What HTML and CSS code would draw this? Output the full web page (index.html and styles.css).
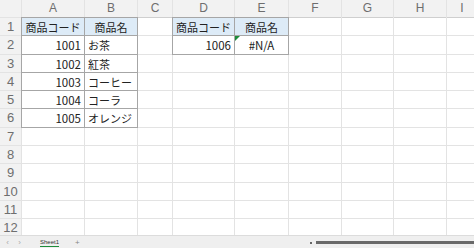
FILE: index.html
```html
<!DOCTYPE html>
<html lang="ja">
<head>
    <meta charset="UTF-8">
    <title>Sheet1</title>
    <link rel="stylesheet" href="styles.css">
</head>
<body>
    <div class="sheet">
        <div class="corner"></div>
        <div class="col-head">A</div>
        <div class="col-head">B</div>
        <div class="col-head">C</div>
        <div class="col-head">D</div>
        <div class="col-head">E</div>
        <div class="col-head">F</div>
        <div class="col-head">G</div>
        <div class="col-head">H</div>
        <div class="col-head">I</div>

        <div class="row-head">1</div>
        <div class="cell tbl head">商品コード</div>
        <div class="cell tbl head">商品名</div>
        <div class="cell"></div>
        <div class="cell tbl head">商品コード</div>
        <div class="cell tbl head">商品名</div>
        <div class="cell"></div><div class="cell"></div><div class="cell"></div><div class="cell"></div>

        <div class="row-head">2</div>
        <div class="cell tbl num">1001</div>
        <div class="cell tbl">お茶</div>
        <div class="cell"></div>
        <div class="cell tbl num">1006</div>
        <div class="cell tbl center err">#N/A</div>
        <div class="cell"></div><div class="cell"></div><div class="cell"></div><div class="cell"></div>

        <div class="row-head">3</div>
        <div class="cell tbl num">1002</div>
        <div class="cell tbl">紅茶</div>
        <div class="cell"></div><div class="cell"></div><div class="cell"></div>
        <div class="cell"></div><div class="cell"></div><div class="cell"></div><div class="cell"></div>

        <div class="row-head">4</div>
        <div class="cell tbl num">1003</div>
        <div class="cell tbl">コーヒー</div>
        <div class="cell"></div><div class="cell"></div><div class="cell"></div>
        <div class="cell"></div><div class="cell"></div><div class="cell"></div><div class="cell"></div>

        <div class="row-head">5</div>
        <div class="cell tbl num">1004</div>
        <div class="cell tbl">コーラ</div>
        <div class="cell"></div><div class="cell"></div><div class="cell"></div>
        <div class="cell"></div><div class="cell"></div><div class="cell"></div><div class="cell"></div>

        <div class="row-head">6</div>
        <div class="cell tbl num">1005</div>
        <div class="cell tbl">オレンジ</div>
        <div class="cell"></div><div class="cell"></div><div class="cell"></div>
        <div class="cell"></div><div class="cell"></div><div class="cell"></div><div class="cell"></div>

        <div class="row-head">7</div>
        <div class="cell"></div><div class="cell"></div><div class="cell"></div><div class="cell"></div><div class="cell"></div>
        <div class="cell"></div><div class="cell"></div><div class="cell"></div><div class="cell"></div>

        <div class="row-head">8</div>
        <div class="cell"></div><div class="cell"></div><div class="cell"></div><div class="cell"></div><div class="cell"></div>
        <div class="cell"></div><div class="cell"></div><div class="cell"></div><div class="cell"></div>

        <div class="row-head">9</div>
        <div class="cell"></div><div class="cell"></div><div class="cell"></div><div class="cell"></div><div class="cell"></div>
        <div class="cell"></div><div class="cell"></div><div class="cell"></div><div class="cell"></div>

        <div class="row-head">10</div>
        <div class="cell"></div><div class="cell"></div><div class="cell"></div><div class="cell"></div><div class="cell"></div>
        <div class="cell"></div><div class="cell"></div><div class="cell"></div><div class="cell"></div>

        <div class="row-head">11</div>
        <div class="cell"></div><div class="cell"></div><div class="cell"></div><div class="cell"></div><div class="cell"></div>
        <div class="cell"></div><div class="cell"></div><div class="cell"></div><div class="cell"></div>

        <div class="row-head">12</div>
        <div class="cell"></div><div class="cell"></div><div class="cell"></div><div class="cell"></div><div class="cell"></div>
        <div class="cell"></div><div class="cell"></div><div class="cell"></div><div class="cell"></div>
    </div>

    <div class="tabbar">
        <span class="nav">&lsaquo;</span>
        <span class="nav">&rsaquo;</span>
        <span class="tab">Sheet1</span>
        <span class="add">+</span>
        <div class="hscroll">
            <span class="grip"></span>
            <span class="thumb"></span>
        </div>
    </div>
</body>
</html>
```

FILE: styles.css
```css
body {
    margin: 0;
    width: 474px;
    height: 248px;
    overflow: hidden;
    background-color: #fff;
    font-family: "Noto Sans CJK JP", "Noto Sans", sans-serif;
    color: #222;
}

.sheet {
    display: grid;
    grid-template-columns: 21px 62px 52px 34px 61px 53px 52px 51px 52px 30px;
    grid-template-rows: 17px repeat(12, 17.3px);
    gap: 1px;
    background-color: #e3e3e3;
    height: 235px;
    overflow: hidden;
}

.corner,
.col-head,
.row-head {
    background-color: #f2f2f2;
    color: #6e6e6e;
    font-family: "Liberation Sans", Arial, sans-serif;
}

.col-head {
    text-align: center;
    line-height: 17px;
    font-size: 12px;
    border-bottom: 1px solid #cfcfcf;
    margin-bottom: -1px;
}

.row-head {
    text-align: center;
    line-height: 18px;
    font-size: 13px;
}

.cell {
    background-color: #fff;
    font-size: 11px;
    line-height: 18px;
    padding: 0 3px;
    white-space: nowrap;
    position: relative;
}

.tbl {
    outline: 1px solid #a6a6a6;
}

.head {
    background-color: #ddebf7;
    text-align: center;
}

.num {
    text-align: right;
    font-size: 11.5px;
}

.center {
    text-align: center;
    font-size: 11.5px;
}

/* green error marker in the top-left corner */
.err::before {
    content: "";
    position: absolute;
    left: 0;
    top: 0;
    border-top: 5px solid #1e8c3a;
    border-right: 5px solid transparent;
}

.tabbar {
    display: flex;
    align-items: center;
    height: 13px;
    background-color: #efefef;
    border-top: 1px solid #dcdcdc;
    font-family: "Liberation Sans", Arial, sans-serif;
    color: #aaa;
    font-size: 8px;
}

.nav {
    width: 9px;
    text-align: center;
    margin-left: 3px;
}

.tab {
    margin-left: 16px;
    font-size: 6px;
    color: #333;
    border-bottom: 1px solid #1e8c3a;
    line-height: 7px;
}

.add {
    margin-left: 16px;
    font-size: 8px;
    color: #888;
}

.hscroll {
    display: flex;
    align-items: center;
    margin-left: auto;
    width: 168px;
    height: 100%;
    gap: 4px;
}

.grip {
    width: 2px;
    height: 2px;
    background-color: #666;
    margin-left: 4px;
}

.thumb {
    flex: 1;
    height: 3px;
    background-color: #6a6a6a;
}
```
